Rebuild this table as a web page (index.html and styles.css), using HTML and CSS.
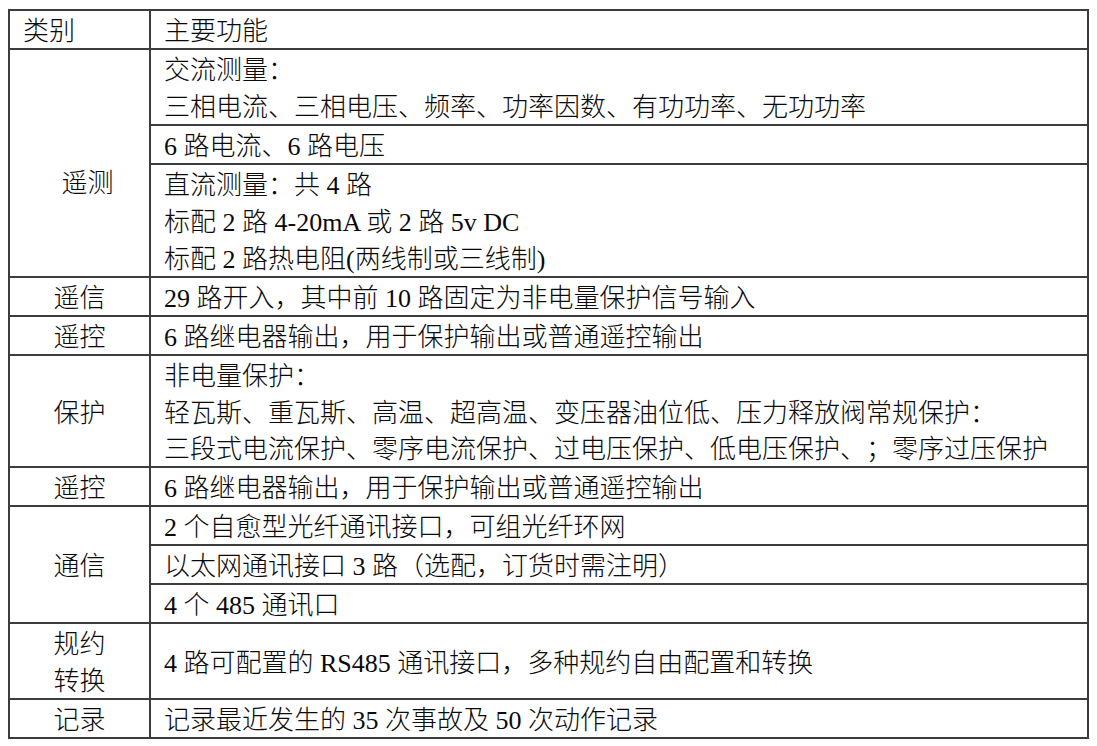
FILE: index.html
```html
<!DOCTYPE html>
<html lang="zh-CN">
<head>
<meta charset="utf-8">
<title>功能表</title>
<link rel="stylesheet" href="styles.css">
</head>
<body>
<table class="spec">
  <colgroup><col class="c1"><col class="c2"></colgroup>
  <tr><td class="cat left"><div class="ln">类别</div></td><td><div class="ln">主要功能</div></td></tr>
  <tr><td class="cat shift" rowspan="3"><div class="ln">遥测</div></td><td><div class="ln">交流测量：</div><div class="ln">三相电流、三相电压、频率、功率因数、有功功率、无功功率</div></td></tr>
  <tr><td><div class="ln">6 路电流、6 路电压</div></td></tr>
  <tr><td><div class="ln">直流测量：共 4 路</div><div class="ln">标配 2 路 4-20mA 或 2 路 5v DC</div><div class="ln">标配 2 路热电阻(两线制或三线制)</div></td></tr>
  <tr><td class="cat"><div class="ln">遥信</div></td><td><div class="ln">29 路开入，其中前 10 路固定为非电量保护信号输入</div></td></tr>
  <tr><td class="cat"><div class="ln">遥控</div></td><td><div class="ln">6 路继电器输出，用于保护输出或普通遥控输出</div></td></tr>
  <tr><td class="cat"><div class="ln">保护</div></td><td><div class="ln">非电量保护：</div><div class="ln">轻瓦斯、重瓦斯、高温、超高温、变压器油位低、压力释放阀常规保护：</div><div class="ln">三段式电流保护、零序电流保护、过电压保护、低电压保护、；零序过压保护</div></td></tr>
  <tr><td class="cat"><div class="ln">遥控</div></td><td><div class="ln">6 路继电器输出，用于保护输出或普通遥控输出</div></td></tr>
  <tr><td class="cat" rowspan="3"><div class="ln">通信</div></td><td><div class="ln">2 个自愈型光纤通讯接口，可组光纤环网</div></td></tr>
  <tr><td><div class="ln">以太网通讯接口 3 路（选配，订货时需注明）</div></td></tr>
  <tr><td><div class="ln">4 个 485 通讯口</div></td></tr>
  <tr><td class="cat"><div class="ln">规约</div><div class="ln">转换</div></td><td><div class="ln">4 路可配置的 RS485 通讯接口，多种规约自由配置和转换</div></td></tr>
  <tr><td class="cat"><div class="ln">记录</div></td><td><div class="ln">记录最近发生的 35 次事故及 50 次动作记录</div></td></tr>
</table>
</body>
</html>
```

FILE: styles.css
```css
html, body {
  background: #ffffff;
}
body {
  margin: 9px 0 0 8px;
  font-family: "Liberation Serif", "Noto Sans CJK SC", serif;
  font-size: 26px;
  font-weight: 300;
  color: #0a0a0a;
  text-spacing-trim: space-all;
}
.spec {
  border-collapse: collapse;
  width: 1081px;
  table-layout: fixed;
}
.c1 { width: 141px; }
.spec td {
  border: 2px solid #3c3c3c;
  padding: 0 0 0 13px;
  vertical-align: middle;
  text-align: left;
  white-space: nowrap;
}
.ln {
  box-sizing: border-box;
  height: 36.96px;
  padding-top: 3px;
  line-height: 36px;
  overflow: visible;
}
.spec td.cat {
  text-align: center;
  padding-left: 0;
}
.spec td.cat.left {
  text-align: left;
  padding-left: 13px;
}
.spec td.cat.shift {
  padding-left: 16px;
  padding-top: 38px;
}
```
